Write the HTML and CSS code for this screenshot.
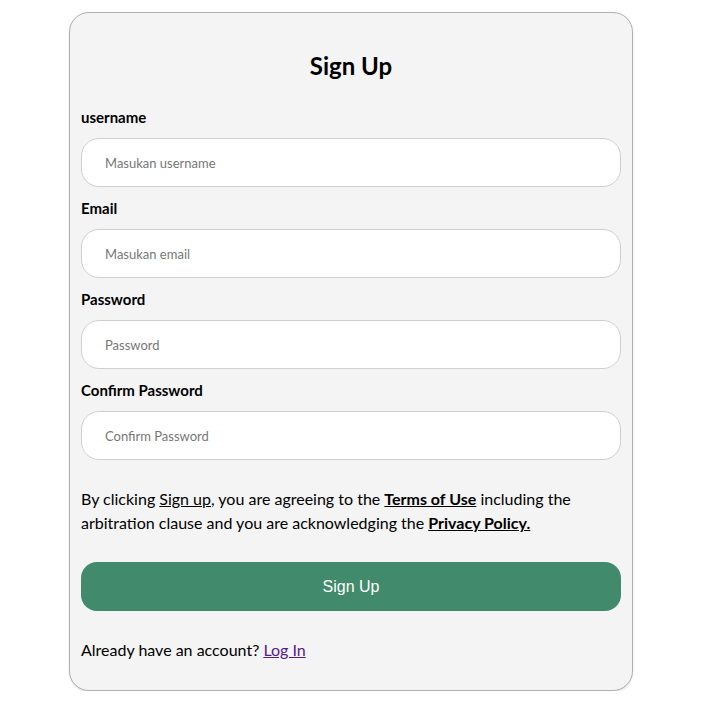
FILE: index.html
```html
<!DOCTYPE html>
<html lang="id">
<head>
<meta charset="utf-8">
<title>Sign Up</title>
<link rel="stylesheet" href="styles.css">
</head>
<body>
<div class="page">
  <form class="card">
    <h2 class="title">Sign Up</h2>
    <label class="label" for="u">username</label>
    <input class="field" id="u" type="text" placeholder="Masukan username">
    <label class="label" for="e">Email</label>
    <input class="field" id="e" type="email" placeholder="Masukan email">
    <label class="label" for="p">Password</label>
    <input class="field" id="p" type="password" placeholder="Password">
    <label class="label" for="c">Confirm Password</label>
    <input class="field" id="c" type="password" placeholder="Confirm Password">
    <p class="terms">By clicking <a class="plain" href="#">Sign up</a>, you are agreeing to the <a class="strong" href="#">Terms of Use</a> including the arbitration clause and you are acknowledging the <a class="strong" href="#">Privacy Policy.</a></p>
    <button class="submit" type="button">Sign Up</button>
    <p class="login">Already have an account? <a class="visited" href="#">Log In</a></p>
  </form>
</div>
</body>
</html>
```
FILE: styles.css
```css
* { box-sizing: border-box; }
html, body { margin: 0; padding: 0; background: #ffffff; }
body { font-family: Lato, "Noto Sans", sans-serif; color: #000; }
.page { padding: 12px 0 0 69px; }
.card {
  width: 564px;
  display: flex;
  flex-direction: column;
  background: #f4f4f4;
  border: 1px solid #b0b0b0;
  border-radius: 20px;
  box-shadow: 0 1px 2px rgba(0,0,0,0.12);
  padding: 13px 11px 28px;
}
.title {
  margin: 25px 0 26px;
  text-align: center;
  font-size: 24px;
  line-height: 30px;
  font-weight: 700;
}
.label {
  font-size: 15px;
  line-height: 20px;
  font-weight: 700;
  margin-bottom: 11px;
}
.field {
  height: 49px;
  width: 100%;
  border: 1px solid #cfcfcf;
  border-radius: 18px;
  background: #fff;
  padding: 0 23px;
  font-family: inherit;
  font-size: 13px;
  margin: 0 0 11px;
  outline: none;
}
.field::placeholder { color: #777; }
.terms {
  margin: 16px 0 27px;
  font-size: 16px;
  line-height: 24px;
}
.terms a { color: #000; }
.terms .strong { font-weight: 700; }
.submit {
  height: 49px;
  border: none;
  border-radius: 16px;
  background: #418a6c;
  color: #fff;
  font-family: "Liberation Sans", Arial, sans-serif;
  font-size: 16px;
  margin-bottom: 27px;
}
.login {
  margin: 0;
  font-size: 16px;
  line-height: 24px;
}
.visited { color: #551a8b; }
```
